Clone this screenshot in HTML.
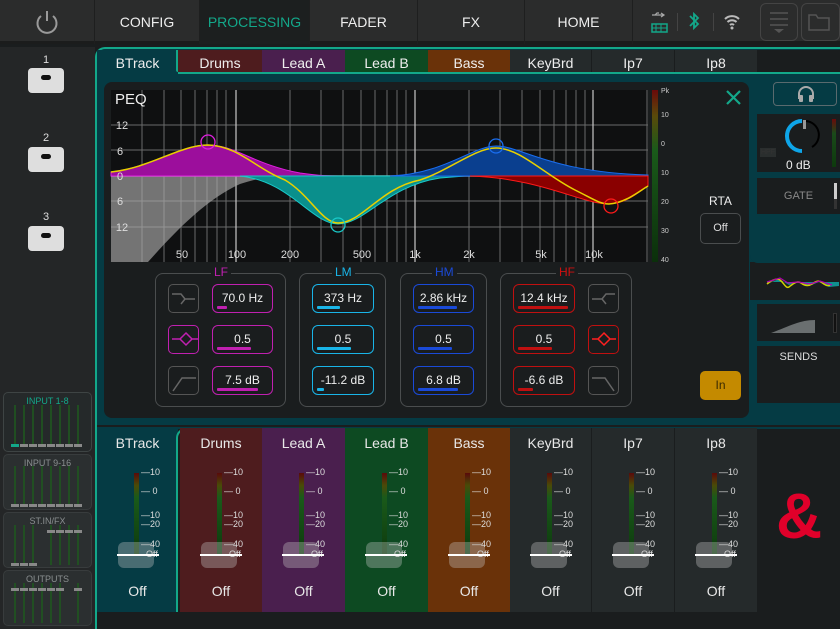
<!DOCTYPE html>
<html><head><meta charset="utf-8"><style>
*{margin:0;padding:0;box-sizing:border-box}
body{width:840px;height:629px;overflow:hidden;background:#1a1d1e;font-family:"Liberation Sans",sans-serif;color:#e8e8e8;position:relative}
.a{position:absolute}
.top{left:0;top:0;width:840px;height:44px;background:#2b2c2c;border-bottom:3px solid #1b1c1c}
.tb{position:absolute;top:0;height:44px;line-height:44px;text-align:center;font-size:14px;color:#eee;border-right:1px solid #1e1f1f}
.side{left:0;top:47px;width:95px;height:582px;background:#242627}
.mb{position:absolute;left:28px;width:36px;height:25px;background:#dedede;border-radius:4px}
.mb:after{content:"";position:absolute;left:13px;top:7px;width:10px;height:5px;background:#111;border-radius:3px}
.ml{position:absolute;left:40px;width:12px;text-align:center;font-size:11px;color:#ddd}
.tab{position:absolute;top:50px;height:24px;line-height:26px;text-align:center;font-size:14px;color:#eee}
.box{position:absolute;border:1.5px solid;border-radius:6px;height:29px;text-align:center;font-size:12px;line-height:26px;color:#eee}
.box i{position:absolute;left:4px;bottom:3px;height:3px;border-radius:1px}
.ib{position:absolute;width:31px;height:29px;border:1.5px solid #555;border-radius:5px}
.grp{position:absolute;top:273px;height:134px;border:1.5px solid #4a4d4e;border-radius:8px}
.gl{position:absolute;top:-9px;font-size:12px;background:#1a1d1e;padding:0 3px}
.col{position:absolute;top:428px;height:184px}
.col .n{position:absolute;top:7px;width:100%;text-align:center;font-size:14px}
.col .off{position:absolute;top:155px;width:100%;text-align:center;font-size:14px}
.mt{position:absolute;left:37px;top:45px;width:5px;height:82px;background:linear-gradient(#5a0a0a,#4a4a08 15%,#1a5a1a 30%,#0d3a0d)}
.sc{position:absolute;left:44px;top:40px;font-size:9px;color:#ddd;line-height:1}
.sc div{position:absolute;white-space:nowrap}
.cap{position:absolute;left:21px;top:114px;width:36px;height:26px;background:rgba(200,200,200,.35);border-radius:6px}
.wl{position:absolute;left:20px;top:126px;width:42px;height:2px;background:#fff}
.mg{position:absolute;left:3px;width:89px;background:#2b2f30;border-radius:5px;border:1px solid #383c3d}
.mg .t{text-align:center;font-size:9px;color:#8a8f90;margin-top:3px}
</style></head><body>

<div class="a top">
 <svg class="a" style="left:33px;top:8px" width="28" height="28" viewBox="0 0 28 28"><path d="M8 8 A9.5 9.5 0 1 0 20 8" fill="none" stroke="#9a9a9a" stroke-width="2"/><line x1="14" y1="3" x2="14" y2="13" stroke="#9a9a9a" stroke-width="2"/></svg>
 <div class="tb" style="left:0;width:95px"></div>
 <div class="tb" style="left:95px;width:105px">CONFIG</div>
 <div class="tb" style="left:200px;width:110px;background:#1c1f1f;color:#13a88a">PROCESSING</div>
 <div class="tb" style="left:310px;width:108px">FADER</div>
 <div class="tb" style="left:418px;width:107px">FX</div>
 <div class="tb" style="left:525px;width:108px">HOME</div>
 <svg class="a" style="left:650px;top:10px" width="20" height="24"><path d="M2 5h12M11 3l3 2-3 2M5 5l2-2h2" stroke="#aaa" fill="none" stroke-width="1.2"/><rect x="2" y="14" width="15" height="8" fill="none" stroke="#13a88a" stroke-width="1.5"/><path d="M2 18h15M6 14v8M11 14v8" stroke="#13a88a"/></svg>
 <div class="a" style="left:677px;top:13px;width:1px;height:18px;background:#444"></div>
 <svg class="a" style="left:688px;top:11px" width="12" height="20"><path d="M2 5l8 8-4 4V3l4 4-8 8" stroke="#13a88a" stroke-width="1.8" fill="none"/></svg>
 <div class="a" style="left:713px;top:13px;width:1px;height:18px;background:#444"></div>
 <svg class="a" style="left:723px;top:12px" width="18" height="18"><path d="M2 7a10 10 0 0 1 14 0M4.5 10a6.5 6.5 0 0 1 9 0M7 13a3 3 0 0 1 4 0" stroke="#bbb" stroke-width="2" fill="none"/><circle cx="9" cy="16" r="1.5" fill="#bbb"/></svg>
 <div class="a" style="left:760px;top:3px;width:38px;height:38px;border:1.5px solid #444;border-radius:6px"></div>
 <svg class="a" style="left:766px;top:10px" width="26" height="24"><path d="M4 3h18M4 9h18M4 15h18" stroke="#555" stroke-width="1.5"/><path d="M8 19h10l-5 4z" fill="#555"/></svg>
 <div class="a" style="left:801px;top:3px;width:39px;height:38px;border:1.5px solid #444;border-radius:6px"></div>
 <svg class="a" style="left:807px;top:12px" width="24" height="20"><path d="M2 3h7l2 3h11v12H2z" stroke="#555" stroke-width="1.5" fill="none"/></svg>
</div>

<div class="a side">
 <div class="ml" style="top:7px">1</div><div class="mb" style="top:21px"></div>
 <div class="ml" style="top:85px">2</div><div class="mb" style="top:100px"></div>
 <div class="ml" style="top:164px">3</div><div class="mb" style="top:179px"></div>
</div>
<!-- mini mixer -->
<div class="mg" style="top:392px;height:60px;background:#25292a;border:1.5px solid #3e4444"><div class="t" style="color:#13a88a">INPUT 1-8</div></div>
<div class="mg" style="top:454px;height:56px"><div class="t">INPUT 9-16</div></div>
<div class="mg" style="top:512px;height:56px"><div class="t">ST.IN/FX</div></div>
<div class="mg" style="top:570px;height:56px"><div class="t">OUTPUTS</div></div>
<svg class="a" style="left:0;top:390px" width="95" height="239">
 <g stroke="#1e5a1e" stroke-width="1.5">
  <path d="M15 15v40M24 15v40M33 15v40M42 15v40M51 15v40M60 15v40M69 15v40M78 15v40"/>
  <path d="M15 76v40M24 76v40M33 76v40M42 76v40M51 76v40M60 76v40M69 76v40M78 76v40"/>
  <path d="M15 135v40M24 135v40M33 135v40M51 135v40M60 135v40M69 135v40M78 135v40"/>
  <path d="M15 193v40M24 193v40M33 193v40M42 193v40M51 193v40M60 193v40M78 193v40"/>
 </g>
 <rect x="11" y="54" width="8" height="3" fill="#13a88a"/>
 <g fill="#888"><rect x="20" y="54" width="8" height="3"/><rect x="29" y="54" width="8" height="3"/><rect x="38" y="54" width="8" height="3"/><rect x="47" y="54" width="8" height="3"/><rect x="56" y="54" width="8" height="3"/><rect x="65" y="54" width="8" height="3"/><rect x="74" y="54" width="8" height="3"/>
 <rect x="11" y="114" width="8" height="3"/><rect x="20" y="114" width="8" height="3"/><rect x="29" y="114" width="8" height="3"/><rect x="38" y="114" width="8" height="3"/><rect x="47" y="114" width="8" height="3"/><rect x="56" y="114" width="8" height="3"/><rect x="65" y="114" width="8" height="3"/><rect x="74" y="114" width="8" height="3"/>
 <rect x="11" y="173" width="8" height="3"/><rect x="20" y="173" width="8" height="3"/><rect x="29" y="173" width="8" height="3"/><rect x="47" y="140" width="8" height="3"/><rect x="56" y="140" width="8" height="3"/><rect x="65" y="140" width="8" height="3"/><rect x="74" y="140" width="8" height="3"/>
 <rect x="11" y="198" width="8" height="3"/><rect x="20" y="198" width="8" height="3"/><rect x="29" y="198" width="8" height="3"/><rect x="38" y="198" width="8" height="3"/><rect x="47" y="198" width="8" height="3"/><rect x="56" y="198" width="8" height="3"/><rect x="74" y="198" width="8" height="3"/></g>
</svg>

<!-- upper panel -->
<div class="a" style="left:95px;top:47px;width:745px;height:380px;background:#053b44;border:2px solid #13a88a;border-right:none;border-bottom:none;border-radius:10px 0 0 0"></div>
<div class="tab" style="left:97px;width:81px;background:#053b44">BTrack</div>
<div class="tab" style="left:178px;width:84px;background:#4e1c1e">Drums</div>
<div class="tab" style="left:262px;width:83px;background:#4a1f4e">Lead A</div>
<div class="tab" style="left:345px;width:83px;background:#0d4a22">Lead B</div>
<div class="tab" style="left:428px;width:82px;background:#6a3209">Bass</div>
<div class="tab" style="left:510px;width:82px;background:#252a2b;border-right:1px solid #1a1d1e">KeyBrd</div>
<div class="tab" style="left:592px;width:83px;background:#252a2b;border-right:1px solid #1a1d1e">Ip7</div>
<div class="tab" style="left:675px;width:82px;background:#252a2b">Ip8</div>
<div class="a" style="left:757px;top:50px;width:83px;height:22px;background:#1a1d1e"></div>
<div class="a" style="left:178px;top:72px;width:662px;height:2px;background:#13a88a"></div>
<div class="a" style="left:176px;top:50px;width:2px;height:22px;background:#13a88a;border-radius:0 0 0 4px"></div>

<!-- right column -->
<div class="a" style="left:773px;top:82px;width:64px;height:24px;border:1.5px solid #5a6a6e;border-radius:4px"></div>
<svg class="a" style="left:796px;top:84px" width="20" height="20"><path d="M3 15v-5a7 7 0 0 1 14 0v5" stroke="#aaa" stroke-width="2" fill="none"/><rect x="3" y="11" width="4" height="7" rx="1" fill="#aaa"/><rect x="13" y="11" width="4" height="7" rx="1" fill="#aaa"/></svg>
<div class="a" style="left:757px;top:114px;width:83px;height:58px;background:#1a1d1e"></div>
<svg class="a" style="left:784px;top:117px" width="40" height="40"><path d="M18 34A14 14 0 0 1 18 4" stroke="#0ea5e8" stroke-width="4" fill="none"/><path d="M22 4A14 14 0 0 1 28 30" stroke="#000" stroke-width="2" fill="none"/><rect x="19" y="3" width="3" height="9" fill="#999"/></svg>
<div class="a" style="left:760px;top:148px;font-size:7px;color:#333;background:#2a2e2e;padding:1px">HPF</div>
<div class="a" style="left:786px;top:158px;font-size:12px;color:#eee">0 dB</div>
<div class="a" style="left:832px;top:119px;width:4px;height:48px;background:linear-gradient(#6a0a0a,#1a4a1a 30%,#0d3a0d)"></div>
<div class="a" style="left:757px;top:178px;width:83px;height:36px;background:#1a1d1e;text-align:center;line-height:36px;font-size:11px;color:#888">GATE</div>
<div class="a" style="left:834px;top:183px;width:3px;height:26px;background:#333"></div><div class="a" style="left:834px;top:183px;width:3px;height:16px;background:#ccc"></div>
<div class="a" style="left:750px;top:262px;width:90px;height:38px;background:#1a1d1e;border-radius:0 0 0 0"></div>
<div class="a" style="left:750px;top:253px;width:90px;height:10px;background:#053b44;border-radius:0 0 0 8px"></div>
<div class="a" style="left:750px;top:300px;width:90px;height:10px;background:#053b44;border-radius:8px 0 0 0"></div>
<svg class="a" style="left:766px;top:274px" width="74" height="20"><path d="M1 10l12-5 10 6 10-3 10 4 10-4 10 5 10-1V8L1 8z" fill="#0f8f8f"/><path d="M1 10c5-4 10-6 13-4 4 3 6 9 9 7 4-3 8-7 12-4s8 3 11 1 6-4 9-2 6 5 9 3" stroke="#d6d000" stroke-width="1.5" fill="none"/><path d="M1 8l13-4 8 5 10-1 12 2 10-3 12 4" stroke="#b000b0" stroke-width="1.2" fill="none"/></svg>
<div class="a" style="left:757px;top:304px;width:83px;height:37px;background:#1a1d1e"></div>
<svg class="a" style="left:770px;top:314px" width="50" height="20"><path d="M1 19C20 12 30 6 45 6v13z" fill="#6a6f70"/></svg>
<div class="a" style="left:833px;top:313px;width:4px;height:20px;background:#111;border:1px solid #333"></div>
<div class="a" style="left:757px;top:346px;width:83px;height:57px;background:#1a1d1e;text-align:center;padding-top:5px;font-size:11px;color:#ddd">SENDS</div>

<!-- PEQ panel -->
<div class="a" style="left:104px;top:82px;width:645px;height:336px;background:#1a1d1e;border-radius:8px"></div>
<svg class="a" style="left:0;top:0" width="750" height="420">
 <rect x="111" y="90" width="537" height="172" fill="#0f1011"/>
 <g stroke="#6a6a6a" stroke-width="1">
  <path d="M142 90v172M164 90v172M181 90v172M195 90v172M207 90v172M217 90v172M226 90v172M290 90v172M321 90v172M343 90v172M361 90v172M375 90v172M387 90v172M397 90v172M406 90v172M469 90v172M500 90v172M522 90v172M540 90v172M554 90v172M566 90v172M576 90v172M585 90v172M647 90v172"/>
  <path d="M111 125h537M111 150h537M111 201h537M111 227h537"/>
 </g>
 <g stroke="#c8c8c8" stroke-width="1.2"><path d="M236 90v172M415 90v172M593 90v172"/></g>
 <path d="M111 176h537" stroke="#aaa" stroke-width="1.5"/>
 <path d="M111 176L111 262L148 262C175 232 205 200 240 184C262 177 275 176 285 176Z" fill="rgba(170,170,170,.65)"/>
 <path d="M111 176L111 172C150 168 180 145 208 145C235 145 255 165 300 173C320 176 330 176 345 176Z" fill="#9c0e9c" stroke="#e020e0" stroke-width="1"/>
 <path d="M240 176C290 181 312 224 338 224C365 224 387 186 440 178L465 176Z" fill="#0a8f8c" stroke="#19c9c9" stroke-width="1"/>
 <path d="M390 176C445 174 472 146 496 146C522 146 548 172 648 175L648 176Z" fill="#0a3f8f" stroke="#1a6ef0" stroke-width="1"/>
 <path d="M470 176C540 178 582 204 609 204C626 204 640 191 648 186L648 176Z" fill="#8a0000" stroke="#ff1a1a" stroke-width="1"/>
 <path d="M111 172C150 168 180 145 208 145C238 146 255 168 285 180C310 195 322 223 338 223C362 223 380 188 420 180C450 170 475 148 496 148C520 148 545 175 575 190C595 200 600 204 609 204C625 203 638 192 648 186" stroke="#e8d000" stroke-width="1.5" fill="none"/>
 <circle cx="208" cy="142" r="7" fill="none" stroke="#e020e0" stroke-width="1.3"/>
 <circle cx="338" cy="225" r="7" fill="none" stroke="#19c9c9" stroke-width="1.3"/>
 <circle cx="496" cy="146" r="7" fill="none" stroke="#1a6ef0" stroke-width="1.3"/>
 <circle cx="611" cy="206" r="7" fill="none" stroke="#ff1a1a" stroke-width="1.3"/>
 <g fill="#ddd" font-size="11" font-family="Liberation Sans" text-anchor="middle">
  <text x="182" y="258">50</text><text x="237" y="258">100</text><text x="290" y="258">200</text><text x="362" y="258">500</text><text x="415" y="258">1k</text><text x="469" y="258">2k</text><text x="541" y="258">5k</text><text x="594" y="258">10k</text>
  <text x="122" y="129">12</text><text x="120" y="155">6</text><text x="120" y="180">0</text><text x="120" y="205">6</text><text x="122" y="231">12</text>
 </g>
 <text x="115" y="104" fill="#eee" font-size="15" font-family="Liberation Sans">PEQ</text>
 <rect x="652" y="90" width="6" height="172" fill="url(#mg)"/>
 <defs><linearGradient id="mg" x1="0" y1="0" x2="0" y2="1"><stop offset="0" stop-color="#6a0a0a"/><stop offset=".15" stop-color="#5a4a0a"/><stop offset=".35" stop-color="#1a5a1a"/><stop offset="1" stop-color="#0b2f0b"/></linearGradient></defs>
 <g fill="#ccc" font-size="7" font-family="Liberation Sans"><text x="661" y="93">Pk</text><text x="661" y="117">10</text><text x="661" y="146">0</text><text x="661" y="175">10</text><text x="661" y="204">20</text><text x="661" y="233">30</text><text x="661" y="262">40</text></g>
 <path d="M727 91l13 13M740 91l-13 13" stroke="#13a88a" stroke-width="2.2"/>
</svg>
<div class="a" style="left:700px;top:194px;width:41px;text-align:center;font-size:12px;color:#eee">RTA</div>
<div class="a" style="left:700px;top:213px;width:41px;height:31px;border:1.5px solid #4a4d4e;border-radius:5px;text-align:center;line-height:28px;font-size:11px;color:#ddd">Off</div>
<div class="a" style="left:700px;top:371px;width:41px;height:29px;background:#c48a00;border-radius:5px;text-align:center;line-height:29px;font-size:12px;color:#3a2a00">In</div>

<!-- band groups -->
<div class="grp" style="left:155px;width:131px"><span class="gl" style="left:55px;color:#c020b0">LF</span></div>
<div class="grp" style="left:299px;width:87px"><span class="gl" style="left:32px;color:#19b5e8">LM</span></div>
<div class="grp" style="left:400px;width:87px"><span class="gl" style="left:31px;color:#1a4ad8">HM</span></div>
<div class="grp" style="left:500px;width:132px"><span class="gl" style="left:55px;color:#d01010">HF</span></div>

<div class="box" style="left:212px;top:284px;width:61px;border-color:#c020b0">70.0 Hz<i style="width:10px;background:#c020b0"></i></div>
<div class="box" style="left:212px;top:325px;width:61px;border-color:#c020b0">0.5<i style="width:34px;background:#c020b0"></i></div>
<div class="box" style="left:212px;top:366px;width:61px;border-color:#c020b0">7.5 dB<i style="width:41px;background:#c020b0"></i></div>
<div class="box" style="left:312px;top:284px;width:62px;border-color:#19b5e8">373 Hz<i style="width:23px;background:#19b5e8"></i></div>
<div class="box" style="left:312px;top:325px;width:62px;border-color:#19b5e8">0.5<i style="width:34px;background:#19b5e8"></i></div>
<div class="box" style="left:312px;top:366px;width:62px;border-color:#19b5e8">-11.2 dB<i style="width:7px;background:#19b5e8"></i></div>
<div class="box" style="left:413px;top:284px;width:61px;border-color:#1a4ad8">2.86 kHz<i style="width:39px;background:#1a4ad8"></i></div>
<div class="box" style="left:413px;top:325px;width:61px;border-color:#1a4ad8">0.5<i style="width:34px;background:#1a4ad8"></i></div>
<div class="box" style="left:413px;top:366px;width:61px;border-color:#1a4ad8">6.8 dB<i style="width:40px;background:#1a4ad8"></i></div>
<div class="box" style="left:513px;top:284px;width:62px;border-color:#c01010">12.4 kHz<i style="width:50px;background:#c01010"></i></div>
<div class="box" style="left:513px;top:325px;width:62px;border-color:#c01010">0.5<i style="width:34px;background:#c01010"></i></div>
<div class="box" style="left:513px;top:366px;width:62px;border-color:#c01010">-6.6 dB<i style="width:15px;background:#c01010"></i></div>

<div class="ib" style="left:168px;top:284px"></div><div class="ib" style="left:168px;top:325px;border-color:#c020b0"></div><div class="ib" style="left:168px;top:366px"></div>
<div class="ib" style="left:588px;top:284px"></div><div class="ib" style="left:588px;top:325px;border-color:#c01010"></div><div class="ib" style="left:588px;top:366px"></div>
<svg class="a" style="left:0;top:0" width="640" height="410" fill="none" stroke-width="1.5">
 <path d="M172 294h9l4 5h10M181 304l4-5" stroke="#666"/>
 <path d="M172 339h8M192 339h6M186 333l6 6-6 6-6-6z" stroke="#c020b0"/>
 <path d="M173 391l9-13h14" stroke="#666"/>
 <path d="M615 294h-9l-4 5h-10M606 304l-4-5" stroke="#666"/>
 <path d="M592 339h6M610 339h6M604 333l6 6-6 6-6-6z" stroke="#ff2020"/>
 <path d="M592 378h13l9 13" stroke="#666"/>
</svg>

<!-- lower faders -->
<div class="a" style="left:95px;top:425px;width:745px;height:204px;background:#1a1d1e"></div>
<div class="col" style="left:97px;width:81px;background:#053b44;top:427px;height:185px"></div>
<div class="a" style="left:178px;top:427px;width:662px;height:2px;background:#053b44"></div>
<div class="a" style="left:176px;top:428px;width:581px;height:184px;border:2px solid #13a88a;border-right:none;border-bottom:none;border-radius:10px 0 0 0"></div>
<div class="a" style="left:95px;top:425px;width:2px;height:204px;background:#13a88a"></div>

<div class="col" style="left:97px;width:81px"><div class="n">BTrack</div><div class="mt"></div><div class="sc"><div style="top:0">—10</div><div style="top:19px">—&nbsp;0</div><div style="top:43px">—10</div><div style="top:52px">—20</div><div style="top:72px">—40</div><div style="top:82px">&nbsp;&nbsp;Off</div></div><div class="cap"></div><div class="wl"></div><div class="off">Off</div></div>
<div class="col" style="left:180px;width:82px;background:#4e1c1e"><div class="n">Drums</div><div class="mt"></div><div class="sc"><div style="top:0">—10</div><div style="top:19px">—&nbsp;0</div><div style="top:43px">—10</div><div style="top:52px">—20</div><div style="top:72px">—40</div><div style="top:82px">&nbsp;&nbsp;Off</div></div><div class="cap"></div><div class="wl"></div><div class="off">Off</div></div>
<div class="col" style="left:262px;width:83px;background:#4a1f4e"><div class="n">Lead A</div><div class="mt"></div><div class="sc"><div style="top:0">—10</div><div style="top:19px">—&nbsp;0</div><div style="top:43px">—10</div><div style="top:52px">—20</div><div style="top:72px">—40</div><div style="top:82px">&nbsp;&nbsp;Off</div></div><div class="cap"></div><div class="wl"></div><div class="off">Off</div></div>
<div class="col" style="left:345px;width:83px;background:#0d4a22"><div class="n">Lead B</div><div class="mt"></div><div class="sc"><div style="top:0">—10</div><div style="top:19px">—&nbsp;0</div><div style="top:43px">—10</div><div style="top:52px">—20</div><div style="top:72px">—40</div><div style="top:82px">&nbsp;&nbsp;Off</div></div><div class="cap"></div><div class="wl"></div><div class="off">Off</div></div>
<div class="col" style="left:428px;width:82px;background:#6a3209"><div class="n">Bass</div><div class="mt"></div><div class="sc"><div style="top:0">—10</div><div style="top:19px">—&nbsp;0</div><div style="top:43px">—10</div><div style="top:52px">—20</div><div style="top:72px">—40</div><div style="top:82px">&nbsp;&nbsp;Off</div></div><div class="cap"></div><div class="wl"></div><div class="off">Off</div></div>
<div class="col" style="left:510px;width:82px;background:#252a2b;border-right:1px solid #1a1d1e"><div class="n">KeyBrd</div><div class="mt"></div><div class="sc"><div style="top:0">—10</div><div style="top:19px">—&nbsp;0</div><div style="top:43px">—10</div><div style="top:52px">—20</div><div style="top:72px">—40</div><div style="top:82px">&nbsp;&nbsp;Off</div></div><div class="cap"></div><div class="wl"></div><div class="off">Off</div></div>
<div class="col" style="left:592px;width:83px;background:#252a2b;border-right:1px solid #1a1d1e"><div class="n">Ip7</div><div class="mt"></div><div class="sc"><div style="top:0">—10</div><div style="top:19px">—&nbsp;0</div><div style="top:43px">—10</div><div style="top:52px">—20</div><div style="top:72px">—40</div><div style="top:82px">&nbsp;&nbsp;Off</div></div><div class="cap"></div><div class="wl"></div><div class="off">Off</div></div>
<div class="col" style="left:675px;width:82px;background:#252a2b"><div class="n">Ip8</div><div class="mt"></div><div class="sc"><div style="top:0">—10</div><div style="top:19px">—&nbsp;0</div><div style="top:43px">—10</div><div style="top:52px">—20</div><div style="top:72px">—40</div><div style="top:82px">&nbsp;&nbsp;Off</div></div><div class="cap"></div><div class="wl"></div><div class="off">Off</div></div>
<div class="a" style="left:757px;top:429px;width:83px;height:183px;background:#1a1d1e"></div>
<div class="a" style="left:776px;top:484px;font-size:64px;font-weight:bold;color:#e0002a;line-height:1">&amp;</div>
</body></html>
